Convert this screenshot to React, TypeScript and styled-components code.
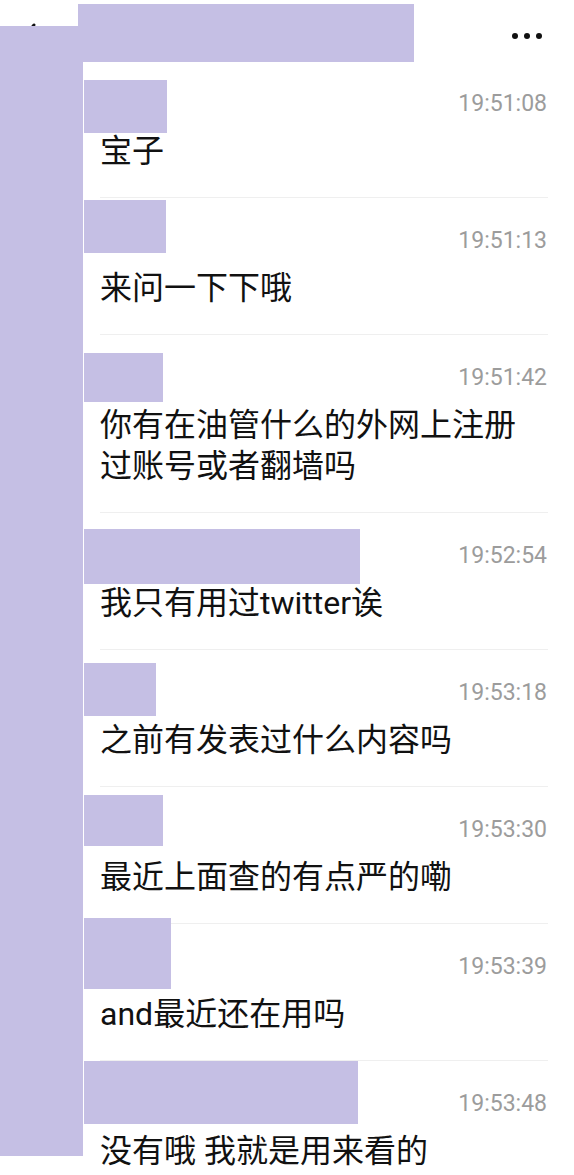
import React from "react";
import styled, { createGlobalStyle } from "styled-components";

const GlobalStyle = createGlobalStyle`
  html, body { margin: 0; padding: 0; background: #ffffff; }
  body { font-family: Roboto, "Noto Sans CJK SC", sans-serif; }
`;

const PURPLE = "#c5bfe4";

const Page = styled.div`
  position: relative;
  width: 574px;
  height: 1175px;
  overflow: hidden;
  background: #fff;
`;

const Header = styled.header`
  height: 61px;
  display: flex;
  align-items: center;
  justify-content: space-between;
  padding: 0 28px 0 20px;
  box-sizing: border-box;
`;

const BackButton = styled.div`
  width: 20px;
  height: 30px;
  margin-top: 10px;
  display: flex;
  align-items: center;
`;

const MoreButton = styled.div`
  display: flex;
  gap: 6px;
  margin-top: 10px;
  margin-right: 4px;
`;

const Dot = styled.span`
  width: 6px;
  height: 6px;
  border-radius: 50%;
  background: #111;
`;

const List = styled.div`
  margin: 0 26px 0 100px;
`;

const Item = styled.div`
  position: relative;
  padding: 30px 0 25px;
  border-bottom: 1px solid #efefef;
`;

const MetaRow = styled.div`
  display: flex;
  justify-content: flex-end;
  height: 26px;
  align-items: center;
`;

const Time = styled.span`
  font-family: Roboto, "Noto Sans", sans-serif;
  font-size: 23px;
  line-height: 26px;
  color: #9c9c9c;
  margin-right: 1px;
`;

const Text = styled.div`
  margin-top: 14px;
  padding-right: 24px;
  font-family: Roboto, "Noto Sans CJK SC", sans-serif;
  font-size: 32px;
  line-height: 41px;
  color: #111;
  white-space: pre-wrap;
`;

const Redact = styled.div<{ $top: number; $h: number; $w: number }>`
  position: absolute;
  left: -16px;
  top: ${(p) => p.$top}px;
  height: ${(p) => p.$h}px;
  width: ${(p) => p.$w}px;
  background: ${PURPLE};
`;

const TitleRedact = styled.div`
  position: absolute;
  left: 78px;
  top: 4px;
  width: 336px;
  height: 58px;
  background: ${PURPLE};
`;

const SideRedact = styled.div`
  position: absolute;
  left: 0;
  top: 26px;
  width: 83px;
  height: 1130px;
  background: ${PURPLE};
`;

type Msg = { time: string; text: string; r: [number, number, number] };

const messages: Msg[] = [
  { time: "19:51:08", text: "宝子", r: [19, 53, 83] },
  { time: "19:51:13", text: "来问一下下哦", r: [2, 53, 82] },
  { time: "19:51:42", text: "你有在油管什么的外网上注册过账号或者翻墙吗", r: [18, 49, 79] },
  { time: "19:52:54", text: "我只有用过twitter诶", r: [16, 55, 276] },
  { time: "19:53:18", text: "之前有发表过什么内容吗", r: [13, 53, 72] },
  { time: "19:53:30", text: "最近上面查的有点严的嘞", r: [8, 51, 79] },
  { time: "19:53:39", text: "and最近还在用吗", r: [-6, 71, 87] },
  { time: "19:53:48", text: "没有哦 我就是用来看的", r: [0, 63, 274] },
];

export default function App() {
  return (
    <Page>
      <GlobalStyle />
      <Header>
        <BackButton>
          <svg width="20" height="30" viewBox="0 0 20 30">
            <path d="M14 4 L5 15 L14 26" fill="none" stroke="#111" strokeWidth="3" strokeLinecap="round" strokeLinejoin="round" />
          </svg>
        </BackButton>
        <MoreButton>
          <Dot />
          <Dot />
          <Dot />
        </MoreButton>
      </Header>
      <List>
        {messages.map((m) => (
          <Item key={m.time}>
            <MetaRow>
              <Time>{m.time}</Time>
            </MetaRow>
            <Text>{m.text}</Text>
            <Redact $top={m.r[0]} $h={m.r[1]} $w={m.r[2]} />
          </Item>
        ))}
      </List>
      <TitleRedact />
      <SideRedact />
    </Page>
  );
}
